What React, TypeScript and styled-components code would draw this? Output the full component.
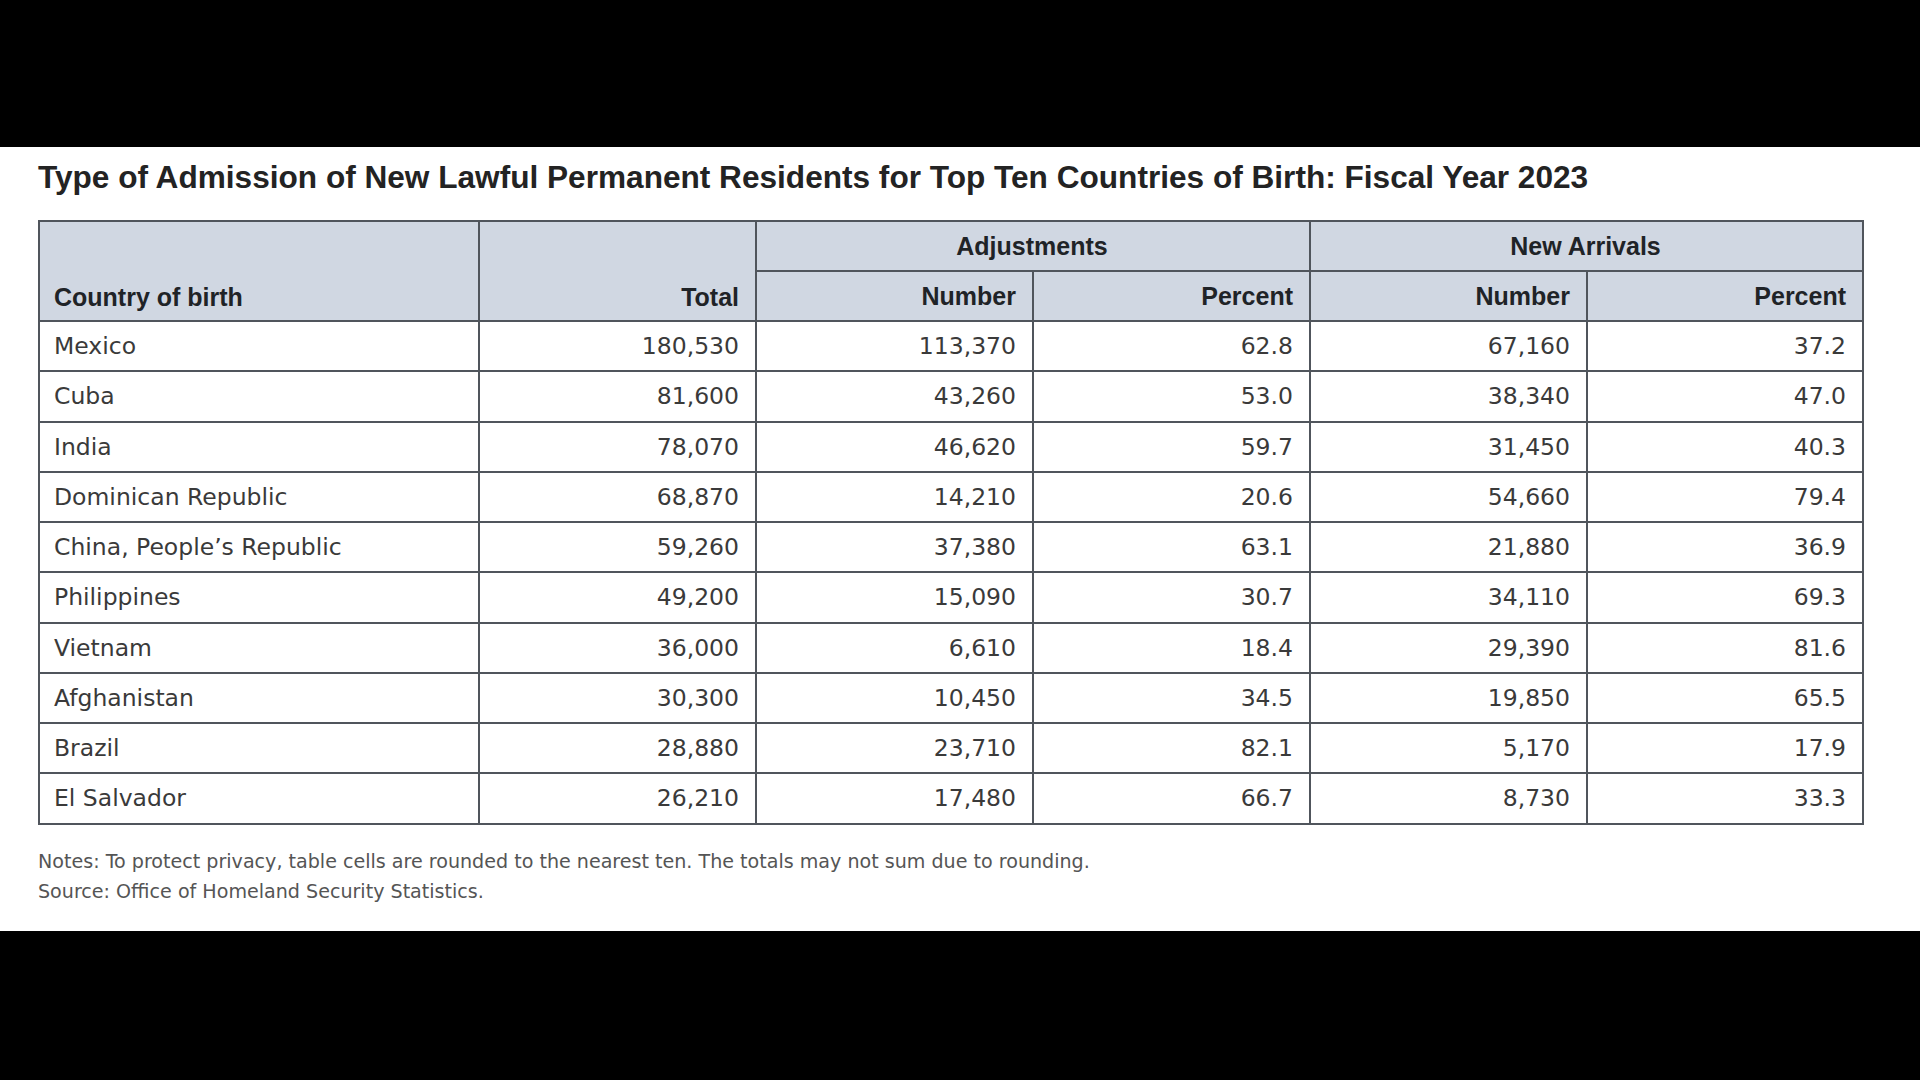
import React from "react";
import styled, { createGlobalStyle } from "styled-components";

const Global = createGlobalStyle`
  html, body { margin: 0; padding: 0; background: #000; }
  #root { width: 1920px; height: 1080px; }
`;

const Page = styled.div`
  width: 1920px;
  height: 1080px;
  background: #000;
  display: flex;
  flex-direction: column;
`;

const Band = styled.div<{ $h: number }>`
  height: ${(p) => p.$h}px;
  flex: none;
  background: #000;
`;

const Sheet = styled.section`
  flex: none;
  height: 784px;
  background: #fff;
  box-sizing: border-box;
  padding: 12px 58px 0 38px;
  display: flex;
  flex-direction: column;
`;

const Title = styled.h1`
  margin: 0;
  font-family: "Liberation Sans", Arial, sans-serif;
  font-weight: 700;
  font-size: 31.6px;
  line-height: 36px;
  color: #232323;
  white-space: nowrap;
`;

const Table = styled.table`
  margin-top: 25px;
  width: 1824px;
  border-collapse: collapse;
  table-layout: fixed;
  border: 2px solid #50555c;
`;

const HeadCell = styled.th<{ $align: "left" | "right" | "center"; $bottom?: boolean }>`
  background: #d0d7e2;
  border: 2px solid #50555c;
  font-family: "Liberation Sans", Arial, sans-serif;
  font-weight: 700;
  font-size: 25px;
  color: #1f2327;
  text-align: ${(p) => p.$align};
  vertical-align: ${(p) => (p.$bottom ? "bottom" : "middle")};
  padding: 0 16px ${(p) => (p.$bottom ? "8px" : "0")} 14px;
  height: 50px;
  box-sizing: border-box;
`;

const Cell = styled.td<{ $align: "left" | "right" }>`
  border: 2px solid #50555c;
  font-family: "DejaVu Sans", sans-serif;
  font-size: 23.5px;
  color: #3a3a3a;
  text-align: ${(p) => p.$align};
  vertical-align: middle;
  padding: 0 16px 0 14px;
  height: 48.25px;
  white-space: nowrap;
`;

const Notes = styled.div`
  margin-top: 22px;
  font-family: "DejaVu Sans", sans-serif;
  font-size: 19.1px;
  line-height: 30px;
  color: #555;
  white-space: nowrap;
`;

const rows: [string, string, string, string, string, string][] = [
  ["Mexico", "180,530", "113,370", "62.8", "67,160", "37.2"],
  ["Cuba", "81,600", "43,260", "53.0", "38,340", "47.0"],
  ["India", "78,070", "46,620", "59.7", "31,450", "40.3"],
  ["Dominican Republic", "68,870", "14,210", "20.6", "54,660", "79.4"],
  ["China, People’s Republic", "59,260", "37,380", "63.1", "21,880", "36.9"],
  ["Philippines", "49,200", "15,090", "30.7", "34,110", "69.3"],
  ["Vietnam", "36,000", "6,610", "18.4", "29,390", "81.6"],
  ["Afghanistan", "30,300", "10,450", "34.5", "19,850", "65.5"],
  ["Brazil", "28,880", "23,710", "82.1", "5,170", "17.9"],
  ["El Salvador", "26,210", "17,480", "66.7", "8,730", "33.3"],
];

export default function App() {
  return (
    <Page>
      <Global />
      <Band $h={147} />
      <Sheet>
        <Title>
          Type of Admission of New Lawful Permanent Residents for Top Ten Countries of Birth: Fiscal Year 2023
        </Title>
        <Table>
          <colgroup>
            <col style={{ width: 440 }} />
            <col style={{ width: 277 }} />
            <col style={{ width: 277 }} />
            <col style={{ width: 277 }} />
            <col style={{ width: 277 }} />
            <col style={{ width: 276 }} />
          </colgroup>
          <thead>
            <tr>
              <HeadCell $align="left" $bottom rowSpan={2}>
                Country of birth
              </HeadCell>
              <HeadCell $align="right" $bottom rowSpan={2}>
                Total
              </HeadCell>
              <HeadCell $align="center" colSpan={2}>Adjustments</HeadCell>
              <HeadCell $align="center" colSpan={2}>New Arrivals</HeadCell>
            </tr>
            <tr>
              <HeadCell $align="right">Number</HeadCell>
              <HeadCell $align="right">Percent</HeadCell>
              <HeadCell $align="right">Number</HeadCell>
              <HeadCell $align="right">Percent</HeadCell>
            </tr>
          </thead>
          <tbody>
            {rows.map((r) => (
              <tr key={r[0]}>
                <Cell $align="left">{r[0]}</Cell>
                {r.slice(1).map((v, i) => (
                  <Cell $align="right" key={i}>{v}</Cell>
                ))}
              </tr>
            ))}
          </tbody>
        </Table>
        <Notes>
          Notes: To protect privacy, table cells are rounded to the nearest ten. The totals may not sum due to rounding.
          <br />
          Source: Office of Homeland Security Statistics.
        </Notes>
      </Sheet>
      <Band $h={149} />
    </Page>
  );
}
